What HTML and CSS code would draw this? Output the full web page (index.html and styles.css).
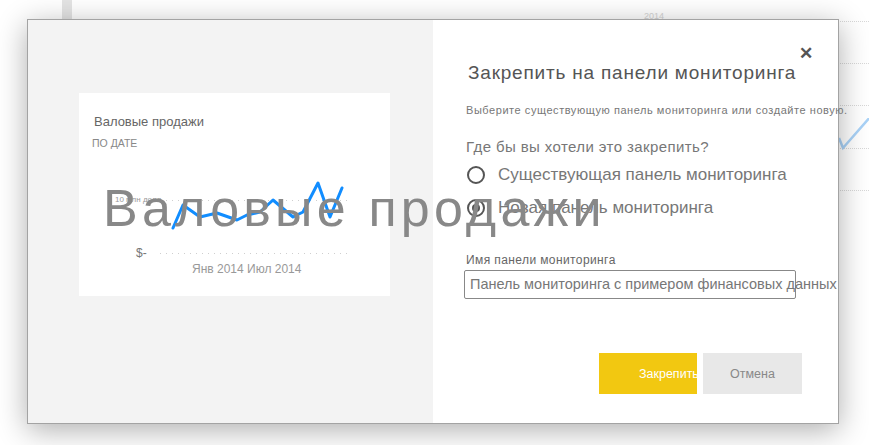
FILE: index.html
```html
<!DOCTYPE html>
<html lang="ru">
<head>
<meta charset="utf-8">
<link rel="stylesheet" href="styles.css">
</head>
<body>
<div class="stage">
  <div class="bg-bar"></div>
  <div class="bg-year">2014</div>
  <div class="bg-dots d1"></div>
  <div class="bg-dots d2"></div>
  <div class="bg-dots d3"></div>
  <div class="bg-dots d4"></div>
  <div class="bg-dots d5"></div>
  <svg class="bg-check" width="40" height="40" viewBox="0 0 40 40"><path d="M2 20 L6 30 L34 -2" fill="none" stroke="#a9d2f7" stroke-width="2.5"/></svg>

  <div class="modal">
    <div class="preview">
      <div class="card">
        <div class="card-title">Валовые продажи</div>
        <div class="card-sub">ПО ДАТЕ</div>
        <svg class="chart" width="311" height="100" viewBox="0 0 311 100">
          <line x1="81" y1="20.5" x2="272" y2="20.5" class="dot"/>
          <line x1="81" y1="73.5" x2="272" y2="73.5" class="dot"/>
          <text x="36" y="22" class="ax">10 млн долл.</text>
          <text x="57" y="77" class="zero">$-</text>
          <text x="113" y="93" class="dates">Янв 2014 Июл 2014</text>
          <path d="M94 48 L104 25 L121 37 L138 33 L158 40 L168 35 L181 32 L194 20 L214 37 L224 32 L239 3 L251 37 L263 8" fill="none" stroke="#118dff" stroke-width="3" stroke-linejoin="round" stroke-linecap="round"/>
        </svg>
      </div>
    </div>
    <div class="form">
      <button class="close" type="button">✕</button>
      <h1 class="title">Закрепить на панели мониторинга</h1>
      <p class="hint">Выберите существующую панель мониторинга или создайте новую.</p>
      <p class="question">Где бы вы хотели это закрепить?</p>
      <label class="radio"><span class="circle"></span>Существующая панель мониторинга</label>
      <label class="radio"><span class="circle on"></span>Новая панель мониторинга</label>
      <div class="field-label">Имя панели мониторинга</div>
      <div class="input">Панель мониторинга с примером финансовых данных</div>
      <div class="actions">
        <button class="btn primary" type="button">Закрепить</button>
        <button class="btn secondary" type="button">Отмена</button>
      </div>
    </div>
  </div>

  <div class="ghost">Валовые продажи</div>
</div>
</body>
</html>
```
FILE: styles.css
```css
* { box-sizing: border-box; }
html, body { margin: 0; padding: 0; }
body {
  width: 869px;
  height: 445px;
  overflow: hidden;
  background: #ffffff;
  font-family: "Liberation Sans", Arial, sans-serif;
}
.stage {
  position: relative;
  width: 869px;
  height: 445px;
  padding: 19px 0 0 27px;
}
.bg-bar {
  position: absolute;
  left: 62px; top: 0;
  width: 10px; height: 19px;
  background: #e4e4e4;
}
.bg-year {
  position: absolute;
  left: 644px; top: 11px;
  font-size: 9px;
  color: #d4d4d4;
}
.bg-dots {
  position: absolute;
  left: 840px;
  width: 29px;
  border-top: 1px dotted #d8d8d8;
}
.d1 { top: 21px; }
.d2 { top: 63px; }
.d3 { top: 105px; }
.d4 { top: 148px; }
.d5 { top: 190px; }
.bg-check {
  position: absolute;
  left: 837px; top: 118px;
}
.modal {
  position: relative;
  display: flex;
  width: 812px;
  height: 405px;
  border: 1px solid #a3a3a3;
  background: #fff;
  box-shadow: 0 6px 28px rgba(0,0,0,0.32);
}
.preview {
  flex: none;
  width: 405px;
  background: #f3f3f3;
  padding: 73px 0 0 51px;
}
.card {
  width: 311px;
  height: 203px;
  background: #fff;
  padding: 20px 0 0 13px;
}
.card-title {
  font-size: 13px;
  color: #666;
  padding-left: 2px;
  line-height: 17px;
}
.card-sub {
  font-size: 10.5px;
  color: #888;
  margin-top: 7px;
  line-height: 12px;
}
.chart {
  display: block;
  margin: 31px 0 0 -13px;
  overflow: visible;
  font-family: "Liberation Sans", Arial, sans-serif;
}
.chart .ax { font-size: 8px; fill: #999; }
.chart .zero { font-size: 12px; fill: #777; }
.chart .dates { font-size: 12px; fill: #999; }
.chart .dot { stroke: #cfcfcf; stroke-width: 1; stroke-dasharray: 1 5; }
.form {
  position: relative;
  flex: 1;
  min-width: 0;
  padding: 41px 0 0 35px;
  color: #666;
}
.close {
  position: absolute;
  right: 25px; top: 25px;
  border: 0; background: none; padding: 0;
  font-size: 17px; font-weight: bold;
  color: #555;
  line-height: 17px;
}
.title {
  margin: 0;
  font-weight: normal;
  font-size: 19px;
  letter-spacing: 0.8px;
  color: #555;
  line-height: 24px;
  white-space: nowrap;
}
.hint {
  margin: 18px 0 0 -2px;
  font-size: 11px;
  letter-spacing: 0.55px;
  color: #777;
  white-space: nowrap;
  line-height: 14px;
}
.question {
  margin: 21px 0 0 -2px;
  font-size: 15px;
  letter-spacing: 0.4px;
  color: #777;
  line-height: 18px;
}
.radio {
  display: flex;
  align-items: center;
  margin-left: -1px;
  margin-top: 5px;
  height: 27px;
  font-size: 17px;
  color: #777;
  gap: 13px;
  white-space: nowrap;
}
.radio + .radio { margin-top: 6px; }
.circle {
  flex: none;
  width: 18px; height: 18px;
  border: 2px solid #555;
  border-radius: 50%;
  display: flex; align-items: center; justify-content: center;
}
.circle.on::after {
  content: "";
  width: 8px; height: 8px;
  border-radius: 50%;
  background: #555;
}
.field-label {
  margin: 32px 0 0 -2px;
  font-size: 12px;
  letter-spacing: 0.4px;
  color: #666;
  line-height: 14px;
}
.input {
  margin: 3px 0 0 -4px;
  width: 332px;
  height: 29px;
  border: 1px solid #888;
  border-radius: 2px;
  padding: 0 0 0 5px;
  font-size: 14.5px;
  color: #777;
  line-height: 27px;
  white-space: nowrap;
  overflow: visible;
}
.actions {
  display: flex;
  gap: 6px;
  margin: 54px 0 0 131px;
}
.btn {
  flex: none;
  width: 98px;
  height: 41px;
  border: 0;
  font-family: inherit;
  font-size: 12.5px;
  padding: 0;
}
.primary {
  background: #f2c811;
  color: #fff;
  overflow: hidden;
  white-space: nowrap;
  text-align: left;
  text-indent: 40px;
}
.secondary {
  width: 99px;
  background: #e8e8e8;
  color: #888;
}
.ghost {
  position: absolute;
  left: 103px; top: 177px;
  font-size: 52px;
  letter-spacing: 4.2px;
  color: #888;
  white-space: nowrap;
  line-height: 62px;
  pointer-events: none;
}
```
